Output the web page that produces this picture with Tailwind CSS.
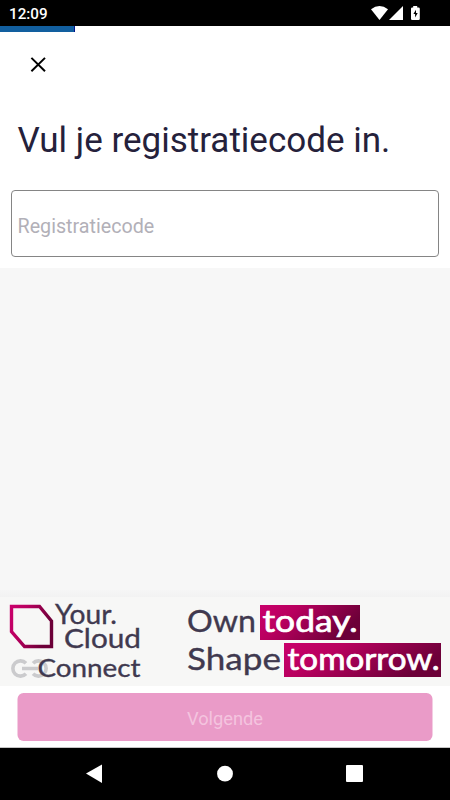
<!DOCTYPE html>
<html lang="nl">
<head>
<meta charset="utf-8">
<meta name="viewport" content="width=device-width, initial-scale=1">
<title>Registratiecode</title>
<script src="https://cdn.jsdelivr.net/npm/@tailwindcss/browser@4"></script>
</head>
<body class="flex h-[800px] w-[450px] flex-col overflow-hidden bg-white font-[Roboto,sans-serif]">
  <!-- Status bar -->
  <header class="flex h-[26px] shrink-0 items-center justify-between bg-black pr-[29px] pl-[9px] text-white">
    <span class="pt-[3px] text-[15.2px] leading-none font-medium">12:09</span>
    <svg class="h-[26px] w-[51px]" viewBox="370 0 51 26" fill="#fff">
      <path d="M371 9.3Q379.5 2.7 388 9.3L379.5 20Z"/>
      <path d="M403 6V20H389Z"/>
      <path fill-rule="evenodd" d="M413.2 6h4v1.5h1.3q1.3 0 1.3 1.3v10q0 1.2-1.2 1.2h-6.4q-1.2 0-1.2-1.2v-10q0-1.3 1.2-1.3h1ZM416 9.8l-2.6 4.2h1.7v3.4l2.6-4.4h-1.7Z"/>
    </svg>
  </header>
  <div class="h-[6px] w-[75px] shrink-0 border-r border-[#00118c] bg-[#125f9f]"></div>

  <main class="flex flex-1 flex-col">
    <section class="flex h-[236px] flex-col">
      <button class="mt-[24px] ml-[30px] h-[17px] w-[17px]" aria-label="Sluiten">
        <svg viewBox="0 0 17 17" fill="none" stroke="#000" stroke-width="2"><path d="M1.4 1.9 15 15.3M15 1.9 1.4 15.3"/></svg>
      </button>
      <h1 class="mt-[47px] ml-[17.5px] text-[35px] leading-[41px] whitespace-nowrap text-[#25213b]">Vul je registratiecode in.</h1>
      <div class="mx-[11px] mt-[29px] flex h-[67px] items-center rounded-[4px] border border-[#858585] pt-[7px] pl-[5.5px] text-[19.7px] text-[#b2b0b8]">Registratiecode</div>
    </section>
    <div class="flex-1 bg-[#f7f7f7]"></div>
    <div class="h-[7px] bg-linear-to-b from-[#f6f6f6] to-[#f2f2f2]"></div>
    <svg class="h-[89px] w-[450px] bg-[#f7f7f6] font-[Lato,sans-serif]" viewBox="0 597 450 89">
      <defs>
        <linearGradient id="pink" x1="0" y1="0" x2="1" y2=".35">
          <stop offset="0" stop-color="#c9006b"/><stop offset=".35" stop-color="#b9005f"/><stop offset="1" stop-color="#6c0038"/>
        </linearGradient>
      </defs>
      <path d="M11.5 606.5H39.5L51.5 621V646.5H24.5L11.5 631.5Z" fill="none" stroke="url(#pink)" stroke-width="3.4"/>
      <g fill="none" stroke="#cbcbcd" stroke-width="3.6">
        <path d="M26 663.3A7.6 7.6 0 1 0 26 673.7M33 663.3A7.6 7.6 0 1 1 33 673.7M22 668.5H38"/>
      </g>
      <g fill="#40394f" stroke="#40394f" stroke-width=".35">
        <text x="55" y="624.4" font-size="27" textLength="62" lengthAdjust="spacingAndGlyphs">Your.</text>
        <text x="64" y="648" font-size="26.5" textLength="77" lengthAdjust="spacingAndGlyphs">Cloud</text>
        <text x="37.5" y="677.4" font-size="24.5" textLength="103" lengthAdjust="spacingAndGlyphs">Connect</text>
        <text x="187" y="632" font-size="31" textLength="69" lengthAdjust="spacingAndGlyphs">Own</text>
        <text x="187" y="669.7" font-size="31" textLength="94" lengthAdjust="spacingAndGlyphs">Shape</text>
      </g>
      <path fill="url(#pink)" d="M260 605H360V640H260Z"/>
      <path fill="url(#pink)" d="M284 643H441V677H284Z"/>
      <g fill="#fff" stroke="#fff" stroke-width=".7">
        <text x="262.5" y="632" font-size="31" textLength="95" lengthAdjust="spacingAndGlyphs">today.</text>
        <text x="287.5" y="669.7" font-size="31" textLength="152" lengthAdjust="spacingAndGlyphs">tomorrow.</text>
      </g>
    </svg>
    <div class="flex h-[62px] items-start justify-center border-b border-[#c4c4c4] bg-white pt-[7px]">
      <button class="h-[48px] w-[415px] -translate-x-[0.5px] rounded-[6px] bg-[#ea9bc8] pt-[3px] pl-px text-[18.3px] text-[#f4c4df]">Volgende</button>
    </div>
  </main>

  <!-- System navigation -->
  <nav class="h-[52px] shrink-0 bg-black">
    <svg class="h-[52px] w-[450px]" viewBox="0 748 450 52" fill="#fff">
      <path d="M86 773.5 102 764.5V783Z"/>
      <circle cx="225" cy="773.7" r="7.9"/>
      <rect x="346" y="765" width="17" height="17" rx="1"/>
    </svg>
  </nav>
</body>
</html>
